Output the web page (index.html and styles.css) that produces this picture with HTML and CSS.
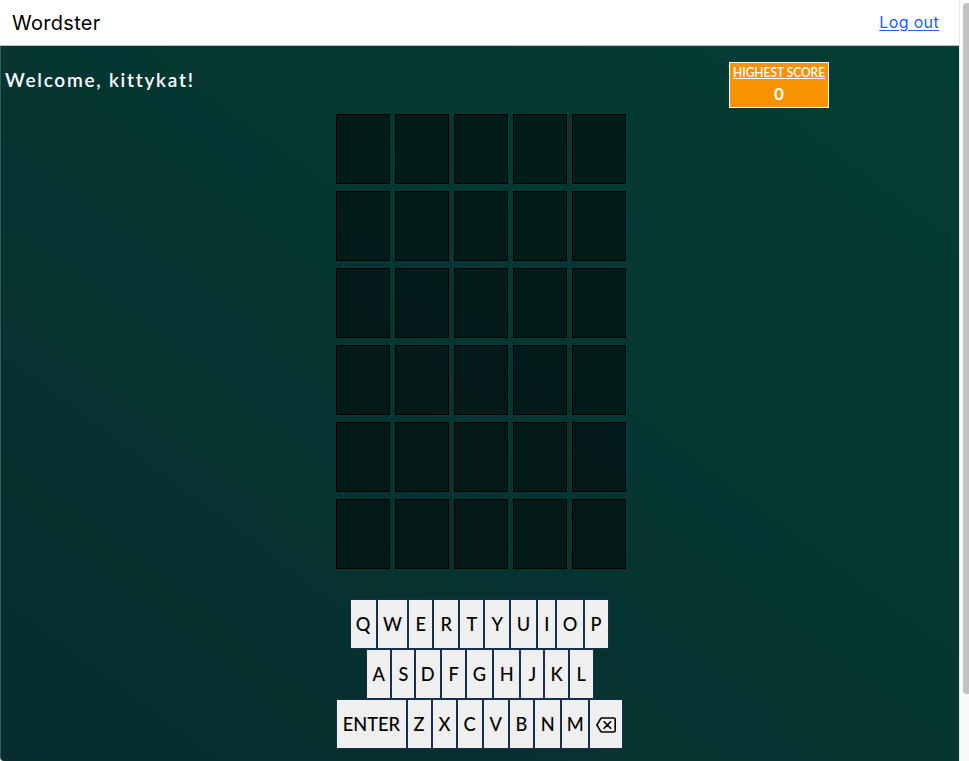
FILE: index.html
```html
<!DOCTYPE html>
<html lang="en">
<head>
<meta charset="utf-8">
<title>Wordster</title>
<link rel="stylesheet" href="styles.css">
</head>
<body>
<div class="app">
  <div class="page">
    <header class="navbar">
      <span class="brand">Wordster</span>
      <a class="logout" href="#">Log out</a>
    </header>
    <main class="game">
      <div class="status">
        <h1 class="welcome">Welcome, kittykat!</h1>
        <div class="score"><span class="score-label">HIGHEST SCORE</span><span class="score-value">0</span></div>
      </div>
      <div class="board">
        <i></i><i></i><i></i><i></i><i></i>
        <i></i><i></i><i></i><i></i><i></i>
        <i></i><i></i><i></i><i></i><i></i>
        <i></i><i></i><i></i><i></i><i></i>
        <i></i><i></i><i></i><i></i><i></i>
        <i></i><i></i><i></i><i></i><i></i>
      </div>
      <div class="keyboard">
        <div class="row row-top"><button><span>Q</span></button><button><span>W</span></button><button><span>E</span></button><button><span>R</span></button><button><span>T</span></button><button><span>Y</span></button><button><span>U</span></button><button><span>I</span></button><button><span>O</span></button><button><span>P</span></button></div>
        <div class="row row-home"><button><span>A</span></button><button><span>S</span></button><button><span>D</span></button><button><span>F</span></button><button><span>G</span></button><button><span>H</span></button><button><span>J</span></button><button><span>K</span></button><button><span>L</span></button></div>
        <div class="row row-bottom"><button><span>ENTER</span></button><button><span>Z</span></button><button><span>X</span></button><button><span>C</span></button><button><span>V</span></button><button><span>B</span></button><button><span>N</span></button><button><span>M</span></button><button aria-label="Backspace"><svg width="20" height="16" viewBox="0 0 20 16" fill="none" stroke="#000" stroke-width="1.6" stroke-linejoin="round" stroke-linecap="round"><path d="M6 1H17.6Q19.2 1 19.2 2.6V13.4Q19.2 15 17.6 15H6Q5.2 15 4.7 14.3L.9 8L4.7 1.7Q5.2 1 6 1ZM8.1 4.7L14.7 11.3M14.7 4.7L8.1 11.3"/></svg></button></div>
      </div>
    </main>
  </div>
  <div class="scrollbar"><div class="thumb"></div></div>
</div>
</body>
</html>
```
FILE: styles.css
```css
* { box-sizing: border-box; }
body { margin: 0; overflow: hidden; }
.app { display: flex; height: 761px; }
.page { flex: 1; display: flex; flex-direction: column; }
.navbar {
  height: 46px;
  padding: 0 20px 0 12px;
  display: flex;
  align-items: center;
  justify-content: space-between;
  border-bottom: 1px solid #b9c4c1;
  background: #fff;
  font-family: Inter, sans-serif;
}
.brand { font-size: 20px; letter-spacing: .3px; color: #000; }
.logout { margin-top: -1px; font-size: 16px; letter-spacing: .35px; color: #1860f0; text-underline-offset: 2px; }
.game {
  flex: 1;
  border-left: 1px solid #36585a;
  border-bottom-left-radius: 4px;
  background: linear-gradient(to top right, #082d2e, #063532 50%, #043d36);
  font-family: Lato, sans-serif;
}
.status { height: 68px; display: flex; justify-content: space-between; padding: 16px 130px 0 4px; }
.welcome {
  margin: 4px 0 0;
  font-size: 19px;
  line-height: 28px;
  font-weight: 600;
  letter-spacing: 1.75px;
  color: #fff;
}
.score {
  width: 100px;
  height: 46px;
  display: flex;
  flex-direction: column;
  align-items: center;
  border: 1px solid #fff;
  background: #f79200;
  color: #fff;
}
.score-label {
  font-size: 13px;
  line-height: 18px;
  font-weight: 600;
  white-space: nowrap;
  text-decoration: underline;
  transform: scaleX(.92);
}
.score-value { font-size: 17px; line-height: 25px; font-weight: 700; }
.board {
  display: grid;
  grid-template-columns: repeat(5, 54px);
  grid-auto-rows: 70px;
  gap: 7px 5px;
  margin-left: 335px;
}
.board i { border: 1px solid #000; background: rgba(0, 0, 0, .5); }
.keyboard { margin-top: 30px; }
.row { display: grid; grid-auto-rows: 50px; }
.row-top { margin-left: 349px; grid-template-columns: 27px 31px 25px 26px 25px 26px 27px 19px 28px 25px; }
.row-home { margin-left: 365px; grid-template-columns: 25px 24px 26px 25px 27px 27px 24px 25px 25px; }
.row-bottom { margin-left: 335px; grid-template-columns: 71px 25px 25px 26px 26px 25px 27px 28px 34px; }
.row button {
  display: flex;
  align-items: center;
  justify-content: center;
  padding: 0;
  border: 1px solid #17304f;
  border-radius: 0;
  background: #efefef;
  color: #000;
  font: 500 20px Lato, sans-serif;
}
.row span { margin-top: -2px; transform: scaleX(.91); }
.row svg { margin-top: 2px; }
.scrollbar { width: 10px; padding: 3px 0 0 3px; border-left: 1px solid #e8e8e8; background: #fafafa; }
.thumb { height: 691px; border-radius: 4px 0 0 4px; background: #c1c1c1; }
```
